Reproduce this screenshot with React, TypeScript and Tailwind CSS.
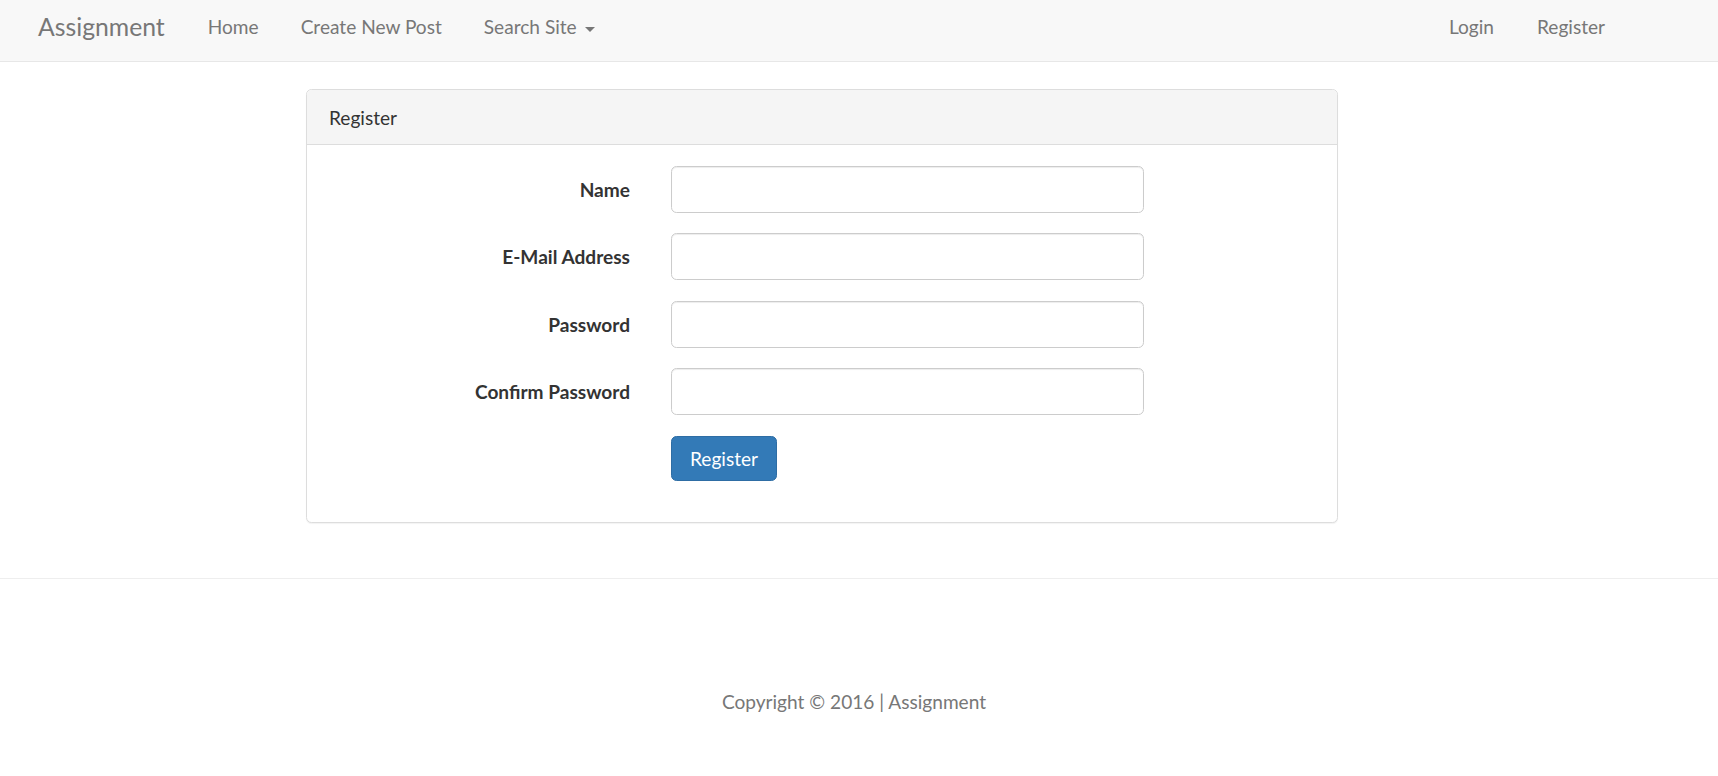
import React from "react";

function Field({ label, type }: { label: string; type: string }) {
  return (
    <div className="flex mb-[20.6px]">
      <label className="w-[323px] text-right font-bold text-[#333] pt-[10px] leading-[27.5px]">
        {label}
      </label>
      <div className="ml-[41px]">
        <input
          type={type}
          className="block w-[473px] h-[47px] rounded-[5.5px] border border-[#ccc] bg-white px-[16px] shadow-[inset_0_1px_1px_rgba(0,0,0,0.075)] outline-none"
        />
      </div>
    </div>
  );
}

export default function App() {
  return (
    <div className="min-h-[776px] w-full bg-white font-[Lato,'Liberation_Sans',sans-serif] text-[19.1px] leading-[27.5px] text-[#333]">
      {/* Navbar */}
      <nav className="flex h-[62px] items-start border-b border-[#e7e7e7] bg-[#f8f8f8] text-[#777]">
        <a className="ml-[38px] pt-[13px] text-[24.75px] leading-[27.5px] text-[#777]">Assignment</a>
        <a className="ml-[43px] pt-[13px]">Home</a>
        <a className="ml-[42px] pt-[13px]">Create New Post</a>
        <a className="ml-[42px] flex items-start pt-[13px]">
          <span>Search Site</span>
          <span className="ml-[8px] mt-[14px] h-0 w-0 border-x-[5px] border-t-[5px] border-x-transparent border-t-[#777]" />
        </a>
        <div className="ml-auto mr-[113px] flex">
          <a className="pt-[13px]">Login</a>
          <a className="ml-[43px] pt-[13px]">Register</a>
        </div>
      </nav>

      {/* Panel */}
      <div className="ml-[306px] mt-[27px] w-[1032px] rounded-[5.5px] border border-[#ddd] bg-white shadow-[0_1px_1px_rgba(0,0,0,0.05)]">
        <div className="h-[55px] rounded-t-[5px] border-b border-[#ddd] bg-[#f5f5f5] px-[22px] pt-[14px] text-[#333]">
          Register
        </div>
        <div className="pt-[20.6px] pb-[20.6px]">
          <Field label="Name" type="text" />
          <Field label="E-Mail Address" type="email" />
          <Field label="Password" type="password" />
          <Field label="Confirm Password" type="password" />
          <div className="flex mb-[20px]">
            <div className="w-[323px]" />
            <button className="ml-[41px] h-[45px] rounded-[5.5px] border border-[#2e6da4] bg-[#337ab7] px-[18px] text-white leading-[27.5px]">
              Register
            </button>
          </div>
        </div>
      </div>

      {/* Footer */}
      <div className="mt-[55px] border-t border-[#eee]">
        <div className="pt-[109px] pr-[10px] text-center text-[#777]">
          Copyright © 2016 | Assignment
        </div>
      </div>
    </div>
  );
}
